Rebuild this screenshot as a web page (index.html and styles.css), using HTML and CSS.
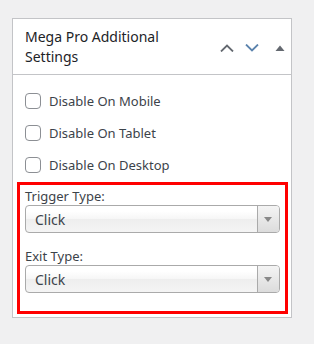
FILE: index.html
```html
<!DOCTYPE html>
<html>
  <head>
    <title>Mega Pro Additional Settings</title>
    <link rel="stylesheet" href="styles.css">
  </head>
  <body>
    <div class="postbox">
      <!-- Box header with ordering controls -->
      <div class="postbox-header">
        <h2 class="hndle">Mega Pro Additional Settings</h2>
        <div class="handle-actions">
          <button class="handle-btn up" aria-label="Move up">
            <svg width="14" height="8" viewBox="0 0 14 8"><path d="M1 7.5 L7 1.5 L13 7.5" fill="none" stroke="currentColor" stroke-width="1.8"/></svg>
          </button>
          <button class="handle-btn down" aria-label="Move down">
            <svg width="14" height="8" viewBox="0 0 14 8"><path d="M1 0.5 L7 6.5 L13 0.5" fill="none" stroke="currentColor" stroke-width="1.8"/></svg>
          </button>
          <button class="handle-btn toggle" aria-label="Toggle panel">
            <svg width="10" height="6" viewBox="0 0 10 6"><path d="M0.5 6 L5 0.5 L9.5 6 Z" fill="currentColor"/></svg>
          </button>
        </div>
      </div>

      <!-- Box content -->
      <div class="inside">
        <div class="check-list">
          <label class="check-row"><input type="checkbox" class="check"> Disable On Mobile</label>
          <label class="check-row"><input type="checkbox" class="check"> Disable On Tablet</label>
          <label class="check-row"><input type="checkbox" class="check"> Disable On Desktop</label>
        </div>

        <div class="type-fields">
          <div class="field">
            <label class="field-label" for="trigger-type">Trigger Type:</label>
            <div class="select-box" id="trigger-type">
              <span class="select-value">Click</span>
              <span class="select-arrow"></span>
            </div>
          </div>
          <div class="field">
            <label class="field-label" for="exit-type">Exit Type:</label>
            <div class="select-box" id="exit-type">
              <span class="select-value">Click</span>
              <span class="select-arrow"></span>
            </div>
          </div>
        </div>
      </div>
    </div>
  </body>
</html>
```

FILE: styles.css
```css
:root {
  --border-color: #c3c4c7;
  --text-color: #3c434a;
  --select-border: #aaa;
}

/* Basic resets */
* {
  margin: 0;
  padding: 0;
  box-sizing: border-box;
}

body {
  font-family: "Noto Sans", "Open Sans", Arial, sans-serif;
  font-size: 13px;
  color: var(--text-color);
  background: #f0f0f1;
  padding: 18px 0 0 12px;
  height: 100vh;
  overflow: hidden;
}

/* Box */
.postbox {
  width: 280px;
  background: #fff;
  border: 1px solid var(--border-color);
}

.postbox-header {
  display: flex;
  align-items: center;
  border-bottom: 1px solid var(--border-color);
  height: 56px;
}

.hndle {
  flex: 1;
  font-size: 14px;
  font-weight: 400;
  line-height: 20px;
  color: #1d2327;
  padding: 0 12px;
}

.handle-actions {
  display: flex;
  align-items: center;
  padding-top: 2px;
}

.handle-btn {
  display: flex;
  align-items: center;
  justify-content: center;
  width: 25px;
  height: 24px;
  border: none;
  background: none;
  cursor: pointer;
  color: #646970;
}

.handle-btn.down {
  color: #5b83ad;
  margin-right: 5px;
}

.handle-btn.toggle {
  width: 22px;
  color: #646970;
}

/* Content */
.inside {
  display: flex;
  flex-direction: column;
  padding: 18px 3px 3px 4px;
}

.check-list {
  display: flex;
  flex-direction: column;
  gap: 16px;
  padding-left: 8px;
}

.check-row {
  display: flex;
  align-items: center;
  height: 16px;
  gap: 8px;
  line-height: 16px;
}

.check {
  appearance: none;
  width: 16px;
  height: 16px;
  border: 1px solid #8c8f94;
  border-radius: 4px;
  background: #fff;
}

.type-fields {
  display: flex;
  flex-direction: column;
  gap: 14px;
  margin-top: 9px;
  border: 3px solid #f00;
  padding: 2px 5px 18px 5px;
}

.field {
  display: flex;
  flex-direction: column;
}

.field-label {
  line-height: 18px;
}

.select-box {
  display: flex;
  align-items: center;
  height: 28px;
  border: 1px solid var(--select-border);
  border-radius: 4px;
  background: linear-gradient(#fff 20%, #f6f6f6 50%, #eee 52%, #f4f4f4);
  overflow: hidden;
}

.select-value {
  flex: 1;
  padding-left: 9px;
  font-size: 14px;
}

.select-arrow {
  position: relative;
  width: 22px;
  height: 100%;
  border-left: 1px solid var(--select-border);
  background: linear-gradient(#f4f4f4, #dcdcdc);
}

/* small triangle inside the arrow button */
.select-arrow::after {
  content: '';
  position: absolute;
  left: 6px;
  top: 11px;
  border-left: 4px solid transparent;
  border-right: 4px solid transparent;
  border-top: 5px solid #888;
}
```
